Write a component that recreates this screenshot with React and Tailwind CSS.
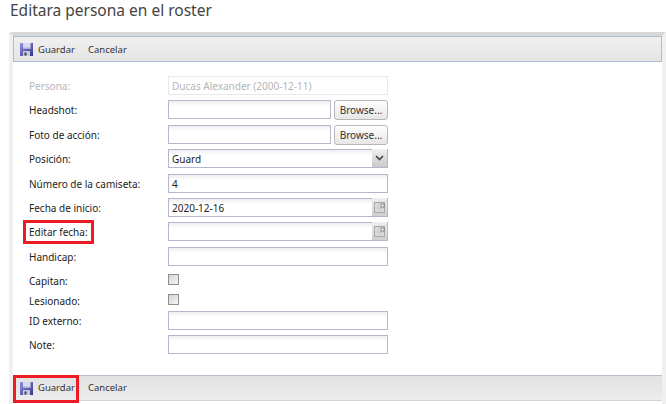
const ROWS = [
  { label: 'Persona:', value: 'Ducas Alexander (2000-12-11)', kind: 'disabled', h: 'h-[24px]' },
  { label: 'Headshot:', kind: 'file', h: 'h-[25px]' },
  { label: 'Foto de acción:', kind: 'file', h: 'h-[24px]' },
  { label: 'Posición:', value: 'Guard', kind: 'select', h: 'h-[25px]' },
  { label: 'Número de la camiseta:', value: '4', kind: 'text', h: 'h-[24px]' },
  { label: 'Fecha de inicio:', value: '2020-12-16', kind: 'date', h: 'h-[24px]' },
  { label: 'Editar fecha:', kind: 'date', h: 'h-[25px]', marked: true },
  { label: 'Handicap:', kind: 'text', h: 'h-[24px]' },
  { label: 'Capitan:', kind: 'check', h: 'h-[20px]' },
  { label: 'Lesionado:', kind: 'check', h: 'h-[20px]' },
  { label: 'ID externo:', kind: 'text', h: 'h-[24px]' },
  { label: 'Note:', kind: 'text', h: 'h-[24px]' },
];

const inputBox = 'h-[19px] flex items-center border border-[#b4b7cd] bg-gradient-to-b from-[#eeeeee] to-white to-[30%] pl-[3px] text-[#222]';

function SaveIcon({ id }) {
  return (
    <svg width="13" height="13" viewBox="0 0 13 13" className="shrink-0">
      <defs>
        <linearGradient id={id} x1="0" y1="0" x2="1" y2="1">
          <stop offset="0" stopColor="#8f92e0" />
          <stop offset="1" stopColor="#33358c" />
        </linearGradient>
      </defs>
      <rect x="0" y="0" width="13" height="13" fill={`url(#${id})`} />
      <rect x="3" y="0" width="7.5" height="6" fill="#d9daf0" />
      <rect x="3" y="4.5" width="7.5" height="1.5" fill="#a9abd6" />
      <rect x="3" y="8" width="7" height="5" fill="#c9c9d2" />
      <rect x="4.5" y="9.5" width="2" height="3" fill="#3b3b55" />
    </svg>
  );
}

function Toolbar({ top, marked }) {
  return (
    <div className={top
      ? 'h-[26px] flex items-center border border-[#a6bfd6] bg-gradient-to-b from-[#f0f0f0] to-[#e4e4e4] text-[9.5px]'
      : 'h-[26px] flex items-center border-t border-t-[#b8bccb] border-b border-b-[#d4d4d4] bg-gradient-to-b from-[#e2e2e2] to-[#ececec] text-[9.5px]'}
    >
      <div className={marked
        ? 'relative flex items-center gap-[5px] pl-[7px] w-[67px] h-full'
        : 'flex items-center gap-[5px] pl-[6px] w-[66px] h-full'}
      >
        <SaveIcon id={top ? 'disk-top' : 'disk-bottom'} />
        <span className={top ? 'mt-[2px]' : ''}>Guardar</span>
        {marked && <div className="absolute left-0 top-[-1px] w-[66px] h-[28px] border-[3px] border-[#ed1c24]" />}
      </div>
      <span className={top ? 'ml-[8px] mt-[2px]' : 'ml-[8px]'}>Cancelar</span>
    </div>
  );
}

function Field({ row }) {
  if (row.kind === 'disabled') {
    return (
      <div className="w-[220px] h-[19px] flex items-center border border-[#e8e8e8] pl-[3px] text-[#b5b5b5]">
        {row.value}
      </div>
    );
  }
  if (row.kind === 'file') {
    return (
      <div className="w-[220px] flex justify-between">
        <div className={`${inputBox} w-[163px]`} />
        <div className="w-[54px] h-[20px] flex items-center justify-center rounded-[3px] border border-[#b8b8b8] bg-gradient-to-b from-white to-[#e6e6e6] text-[#333]">
          Browse...
        </div>
      </div>
    );
  }
  if (row.kind === 'select') {
    return (
      <div className={`${inputBox} w-[220px] relative`}>
        {row.value}
        <div className="absolute right-0 top-[-1px] w-[15px] h-[19px] flex items-center justify-center border-b border-b-[#b4b7cd] bg-gradient-to-b from-[#f2f2f2] to-[#c9c9c9]">
          <svg width="9" height="6" viewBox="0 0 9 6">
            <path d="M1 1 L4.5 4.5 L8 1" fill="none" stroke="#444" strokeWidth="1.6" />
          </svg>
        </div>
      </div>
    );
  }
  if (row.kind === 'date') {
    return (
      <div className={`${inputBox} w-[220px] relative`}>
        {row.value}
        <div className="absolute right-0 top-[-1px] w-[15px] h-[19px] flex items-center justify-center border-b border-b-[#b4b7cd] bg-gradient-to-b from-[#efefef] to-[#cfcfcf]">
          <svg width="11" height="11" viewBox="0 0 11 11">
            <rect x="0.5" y="0.5" width="10" height="10" fill="#dedede" stroke="#a8a8a8" />
            <path d="M4 1 V10 M7 1 V10 M1 6 H10" stroke="#c6c6c6" />
            <rect x="7" y="2" width="3" height="3" fill="#fff" stroke="#666" strokeWidth="0.7" />
          </svg>
        </div>
      </div>
    );
  }
  if (row.kind === 'check') {
    return <div className="mt-[3px] w-[11px] h-[11px] border border-[#8f8f8f] bg-gradient-to-br from-[#d4d4d4] to-[#f4f4f4]" />;
  }
  return <div className={`${inputBox} w-[220px]`}>{row.value}</div>;
}

export default function App() {
  return (
    <div className="w-[666px] h-[404px] overflow-hidden bg-white text-[10px] leading-none text-[#333] font-['Noto_Sans',sans-serif]">
      <h1 className="h-[32px] pl-[10px] pt-[1px] text-[15.5px] leading-[18px] text-[#444]">Editara persona en el roster</h1>
      <div className="ml-[9px] h-[372px] border-x-[4px] border-t-[4px] border-[#f0f0f0] border-t-[#d8d8d8] rounded-tl-[3px] pb-[3px] flex flex-col">
        <Toolbar top />
        <div className="flex-1 pt-[14px] flex flex-col">
          {ROWS.map((row) => (
            <div key={row.label} className={`${row.h} flex items-start`}>
              <div className="relative w-[155px] pl-[16px] h-[19px] flex items-center">
                <span className={row.kind === 'disabled' ? 'text-[#b5b5b5]' : 'text-[#222]'}>{row.label}</span>
                {row.marked && <span className="absolute left-[10px] top-[-2px] w-[71px] h-[24px] border-[3px] border-[#ed1c24]" />}
              </div>
              <Field row={row} />
            </div>
          ))}
        </div>
        <Toolbar marked />
      </div>
    </div>
  );
}
